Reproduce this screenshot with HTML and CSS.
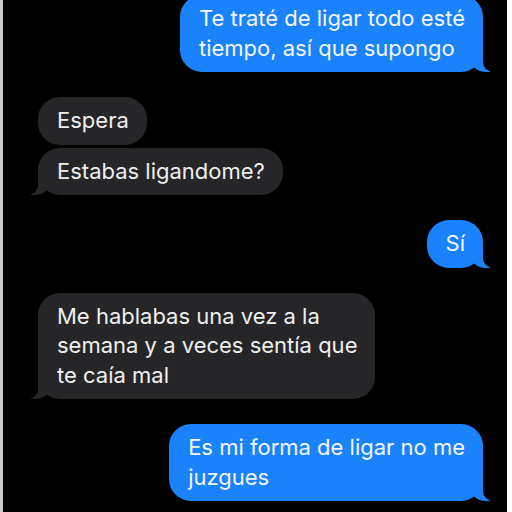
FILE: index.html
```html
<!DOCTYPE html>
<html lang="es">
  <head>
    <meta charset="UTF-8" />
    <meta name="viewport" content="width=device-width, initial-scale=1.0" />
    <title>Mensajes</title>
    <link rel="stylesheet" href="styles.css">
  </head>
  <body>
    <div class="screen">
      <div class="thread">
        <!-- first message, cut off at the top of the screenshot -->
        <div class="msg sent">Te traté de ligar todo esté<br>tiempo, así que supongo</div>

        <div class="group">
          <div class="msg received">Espera</div>
          <div class="msg received tail">Estabas ligandome?</div>
        </div>

        <div class="msg sent">Sí</div>

        <div class="msg received tail">Me hablabas una vez a la<br>semana y a veces sentía que<br>te caía mal</div>

        <div class="msg sent">Es mi forma de ligar no me<br>juzgues</div>
      </div>
    </div>
  </body>
</html>
```

FILE: styles.css
```css
/* Page frame: screenshot has a grey strip left, white strip right */
body {
  margin: 0;
  background: #fff;
  font-family: "Inter", "Liberation Sans", sans-serif;
}

.screen {
  height: 512px;
  margin-right: 5px;
  border-left: 3px solid #c9c9c9;
  background: #000;
  overflow: hidden;
}

.thread {
  display: flex;
  flex-direction: column;
  gap: 25px;
  padding: 0 24px 0 35px;
  margin-top: -5px;
}

.group {
  display: flex;
  flex-direction: column;
  align-items: flex-start;
  gap: 3px;
}

/* Bubbles */
.msg {
  position: relative;
  padding: 9px 18px 9px 19px;
  border-radius: 22px;
  font-size: 22px;
  line-height: 29.5px;
}

.sent {
  align-self: flex-end;
  background: #1a82fb;
  color: #f2f7ff;
}

.received {
  align-self: flex-start;
  background: #262629;
  color: #efefef;
}

/* iMessage style tails */
.sent::before,
.tail::before {
  content: "";
  position: absolute;
  bottom: 0;
  width: 20px;
  height: 20px;
}

.sent::after,
.tail::after {
  content: "";
  position: absolute;
  bottom: 0;
  width: 10px;
  height: 22px;
  background: #000;
}

.sent::before {
  right: -7px;
  background: #1a82fb;
  border-bottom-left-radius: 16px 14px;
}

.sent::after {
  right: -10px;
  border-bottom-left-radius: 10px;
}

.tail::before {
  left: -7px;
  background: #262629;
  border-bottom-right-radius: 16px 14px;
}

.tail::after {
  left: -10px;
  border-bottom-right-radius: 10px;
}
```
